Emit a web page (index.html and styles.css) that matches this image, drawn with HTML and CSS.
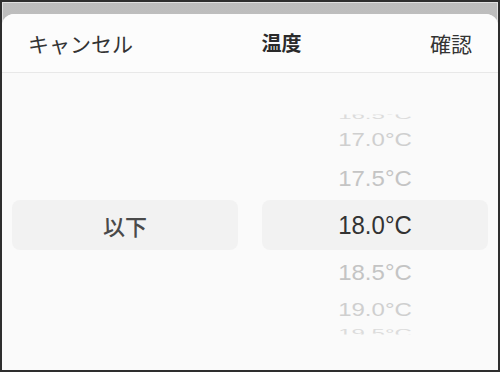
FILE: index.html
```html
<!DOCTYPE html>
<html lang="ja">
<head>
<meta charset="utf-8">
<link rel="stylesheet" href="styles.css">
</head>
<body>
<div class="frame">
  <div class="sheet">
    <div class="header">
      <span class="btn">キャンセル</span>
      <span class="title">温度</span>
      <span class="btn">確認</span>
    </div>
    <div class="body">
      <div class="wheel wheel-left">
        <div class="item selected label">以下</div>
      </div>
      <div class="wheel">
        <div class="item far edge-top"><span>16.5°C</span></div>
        <div class="item mid"><span>17.0°C</span></div>
        <div class="item near"><span>17.5°C</span></div>
        <div class="item selected"><span>18.0°C</span></div>
        <div class="item near"><span>18.5°C</span></div>
        <div class="item mid"><span>19.0°C</span></div>
        <div class="item far edge-bottom"><span>19.5°C</span></div>
      </div>
    </div>
  </div>
</div>
</body>
</html>
```

FILE: styles.css
```css
* { box-sizing: border-box; }
html, body { margin: 0; padding: 0; }
body {
  width: 500px;
  height: 372px;
  font-family: "Liberation Sans", "Noto Sans CJK JP", sans-serif;
  overflow: hidden;
}
.frame {
  width: 500px;
  height: 372px;
  border: 2px solid #2e2e2e;
  background: linear-gradient(#bdbdbd, #cdcdcd);
  padding-top: 12px;
  box-shadow: inset 0 0 0 1px #e0e0e0;
}
.sheet {
  height: 100%;
  background: #fafafa;
  border-radius: 12px 12px 0 0;
  display: flex;
  flex-direction: column;
}
.header {
  height: 59px;
  padding: 0 26px;
  display: flex;
  align-items: center;
  justify-content: space-between;
  border-bottom: 1px solid #e8e8e8;
  background: #fcfcfc;
  border-radius: 12px 12px 0 0;
  color: #333;
  font-family: "Noto Sans CJK JP", sans-serif;
  font-size: 21px;
  line-height: 1;
}
.title { font-weight: bold; color: #2a2a2a; font-size: 20px; }
.body {
  display: grid;
  grid-template-columns: 1fr 1fr;
  column-gap: 24px;
  padding: 35px 10px 0;
}
.wheel {
  height: 234px;
  display: flex;
  flex-direction: column;
  justify-content: center;
  overflow: hidden;
}
.item {
  display: flex;
  align-items: center;
  justify-content: center;
  font-size: 24px;
  line-height: 1;
  white-space: nowrap;
}
.item span { display: block; transform: scaleY(1.08); }
.selected {
  height: 50px;
  background: #f2f2f2;
  border-radius: 8px;
  color: #333;
}
.label {
  font-family: "Noto Sans CJK JP", sans-serif;
  font-size: 22px;
  font-weight: 500;
  color: #4a4a4a;
}
.near { height: 44px; color: #c4c4c4; }
.near span { transform: scaleY(0.95); }
.mid { height: 32px; color: #cfcfcf; }
.mid span { transform: scaleY(0.75); }
.far { height: 16px; color: #dcdcdc; }
.far span { transform: scaleY(0.42); }
.edge-top span { clip-path: inset(35% 0 0 0); }
.edge-bottom span { clip-path: inset(0 0 45% 0); }
```
